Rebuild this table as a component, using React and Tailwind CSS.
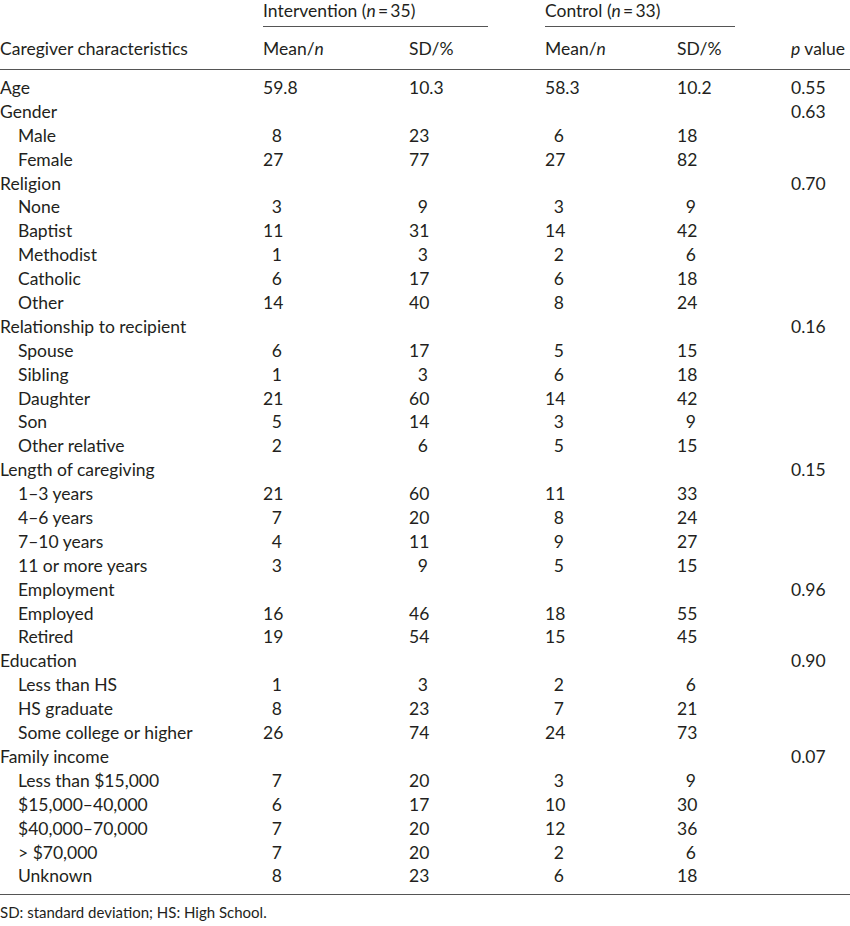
import React from "react";

const rows = [
  { label: "Age", a: "59.8", b: "10.3", c: "58.3", d: "10.2", p: "0.55", dec: true },
  { label: "Gender", p: "0.63" },
  { label: "Male", sub: true, a: "8", b: "23", c: "6", d: "18" },
  { label: "Female", sub: true, a: "27", b: "77", c: "27", d: "82" },
  { label: "Religion", p: "0.70" },
  { label: "None", sub: true, a: "3", b: "9", c: "3", d: "9" },
  { label: "Baptist", sub: true, a: "11", b: "31", c: "14", d: "42" },
  { label: "Methodist", sub: true, a: "1", b: "3", c: "2", d: "6" },
  { label: "Catholic", sub: true, a: "6", b: "17", c: "6", d: "18" },
  { label: "Other", sub: true, a: "14", b: "40", c: "8", d: "24" },
  { label: "Relationship to recipient", p: "0.16" },
  { label: "Spouse", sub: true, a: "6", b: "17", c: "5", d: "15" },
  { label: "Sibling", sub: true, a: "1", b: "3", c: "6", d: "18" },
  { label: "Daughter", sub: true, a: "21", b: "60", c: "14", d: "42" },
  { label: "Son", sub: true, a: "5", b: "14", c: "3", d: "9" },
  { label: "Other relative", sub: true, a: "2", b: "6", c: "5", d: "15" },
  { label: "Length of caregiving", p: "0.15" },
  { label: "1–3 years", sub: true, a: "21", b: "60", c: "11", d: "33" },
  { label: "4–6 years", sub: true, a: "7", b: "20", c: "8", d: "24" },
  { label: "7–10 years", sub: true, a: "4", b: "11", c: "9", d: "27" },
  { label: "11 or more years", sub: true, a: "3", b: "9", c: "5", d: "15" },
  { label: "Employment", sub: true, p: "0.96" },
  { label: "Employed", sub: true, a: "16", b: "46", c: "18", d: "55" },
  { label: "Retired", sub: true, a: "19", b: "54", c: "15", d: "45" },
  { label: "Education", p: "0.90" },
  { label: "Less than HS", sub: true, a: "1", b: "3", c: "2", d: "6" },
  { label: "HS graduate", sub: true, a: "8", b: "23", c: "7", d: "21" },
  { label: "Some college or higher", sub: true, a: "26", b: "74", c: "24", d: "73" },
  { label: "Family income", p: "0.07" },
  { label: "Less than $15,000", sub: true, a: "7", b: "20", c: "3", d: "9" },
  { label: "$15,000–40,000", sub: true, a: "6", b: "17", c: "10", d: "30" },
  { label: "$40,000–70,000", sub: true, a: "7", b: "20", c: "12", d: "36" },
  { label: "> $70,000", sub: true, a: "7", b: "20", c: "2", d: "6" },
  { label: "Unknown", sub: true, a: "8", b: "23", c: "6", d: "18" },
];

const grid = "grid grid-cols-[263px_146px_136px_132px_114px_1fr]";

function Num({ value, dec }) {
  if (!value) return <div />;
  if (dec) return <div>{value}</div>;
  return (
    <div>
      <span className="inline-block w-[19px] text-right">{value}</span>
    </div>
  );
}

export default function App() {
  return (
    <div className="w-[850px] h-[926px] bg-white text-[#231f20] font-['Lato',sans-serif] text-[17.5px]">
      {/* group headings */}
      <div className={grid + " h-[27px] leading-[21px]"}>
        <div />
        <div className="col-span-2 w-[225px] border-b-[1.5px] border-[#555]">
          Intervention (<i>n</i>&thinsp;=&thinsp;35)
        </div>
        <div className="col-span-2 w-[190px] border-b-[1.5px] border-[#555]">
          Control (<i>n</i>&thinsp;=&thinsp;33)
        </div>
        <div />
      </div>

      <div className={grid + " h-[43px] items-center border-b-[1.5px] border-[#555] leading-[20px] pt-[1px]"}>
        <div>Caregiver characteristics</div>
        <div>
          Mean/<i>n</i>
        </div>
        <div>SD/%</div>
        <div>
          Mean/<i>n</i>
        </div>
        <div>SD/%</div>
        <div>
          <i>p</i> value
        </div>
      </div>

      <div className="pt-[6px] pb-[6px] border-b-[1.5px] border-[#555]">
        {rows.map((r) => (
          <div key={r.label} className={grid + " h-[23.9px] leading-[23.9px]"}>
            <div className={r.sub ? "pl-[18px]" : ""}>{r.label}</div>
            <Num value={r.a} dec={r.dec} />
            <Num value={r.b} dec={r.dec} />
            <Num value={r.c} dec={r.dec} />
            <Num value={r.d} dec={r.dec} />
            <div>{r.p}</div>
          </div>
        ))}
      </div>

      <div className="pt-[8px] text-[15px] leading-[18px]">SD: standard deviation; HS: High School.</div>
    </div>
  );
}
